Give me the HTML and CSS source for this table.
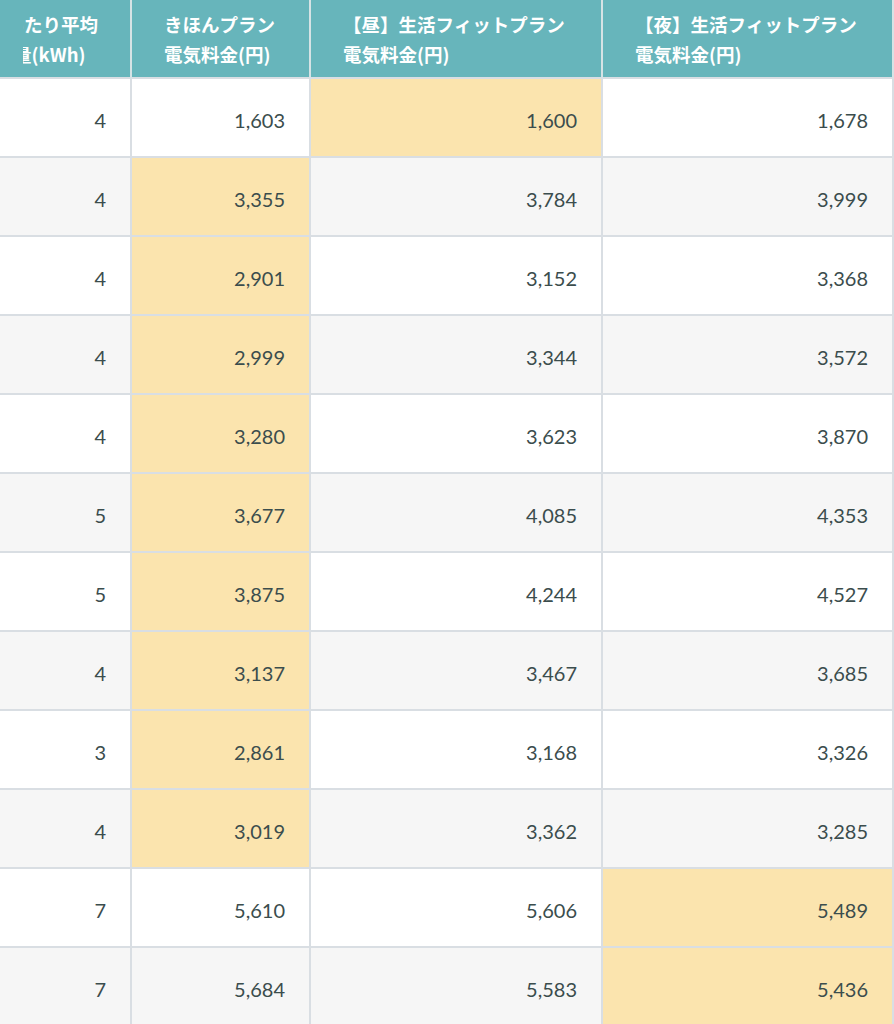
FILE: index.html
```html
<!DOCTYPE html>
<html lang="ja">
<head>
<meta charset="utf-8">
<title>電気料金比較</title>
<link rel="stylesheet" href="styles.css">
</head>
<body>
<div class="scroller">
  <table class="price-table">
    <colgroup>
      <col class="c-usage">
      <col class="c-basic">
      <col class="c-day">
      <col class="c-night">
    </colgroup>
    <thead>
      <tr>
        <th class="th-usage"><div class="clip"><div class="clip-text">1日あたり平均<br>使用量(kWh)</div></div></th>
        <th>きほんプラン<br>電気料金(円)</th>
        <th>【昼】生活フィットプラン<br>電気料金(円)</th>
        <th>【夜】生活フィットプラン<br>電気料金(円)</th>
      </tr>
    </thead>
    <tbody>
      <tr><td>4</td><td>1,603</td><td class="best">1,600</td><td>1,678</td></tr>
      <tr><td>4</td><td class="best">3,355</td><td>3,784</td><td>3,999</td></tr>
      <tr><td>4</td><td class="best">2,901</td><td>3,152</td><td>3,368</td></tr>
      <tr><td>4</td><td class="best">2,999</td><td>3,344</td><td>3,572</td></tr>
      <tr><td>4</td><td class="best">3,280</td><td>3,623</td><td>3,870</td></tr>
      <tr><td>5</td><td class="best">3,677</td><td>4,085</td><td>4,353</td></tr>
      <tr><td>5</td><td class="best">3,875</td><td>4,244</td><td>4,527</td></tr>
      <tr><td>4</td><td class="best">3,137</td><td>3,467</td><td>3,685</td></tr>
      <tr><td>3</td><td class="best">2,861</td><td>3,168</td><td>3,326</td></tr>
      <tr><td>4</td><td class="best">3,019</td><td>3,362</td><td>3,285</td></tr>
      <tr><td>7</td><td>5,610</td><td>5,606</td><td class="best">5,489</td></tr>
      <tr><td>7</td><td>5,684</td><td>5,583</td><td class="best">5,436</td></tr>
    </tbody>
  </table>
</div>
</body>
</html>
```

FILE: styles.css
```css
html, body {
  margin: 0;
  padding: 0;
  background: #ffffff;
}

body {
  font-family: "Lato", "Noto Sans CJK JP", sans-serif;
  color: #3b4d4d;
}

.scroller {
  width: 894px;
  overflow: hidden;
}

.price-table {
  width: 894px;
  table-layout: fixed;
  border-collapse: separate;
  border-spacing: 0;
}

.c-usage { width: 132px; }
.c-basic { width: 179px; }
.c-day { width: 292px; }
.c-night { width: 291px; }

.price-table th,
.price-table td {
  box-sizing: border-box;
  height: 79px;
  border-right: 2px solid #d9dee3;
  border-bottom: 2px solid #d9dee3;
}

.price-table th {
  background: #67b5bb;
  color: #ffffff;
  font-family: "Noto Sans CJK JP", sans-serif;
  font-size: 18.5px;
  font-weight: 700;
  line-height: 30px;
  text-align: left;
  vertical-align: middle;
  padding: 0 8px 0 32px;
  white-space: nowrap;
  border-right-color: #d6e3e5;
}

.price-table th.th-usage {
  padding: 0 32px 0 23px;
}

.clip {
  display: flex;
  justify-content: flex-end;
  overflow: hidden;
}

.clip-text {
  flex: none;
  white-space: nowrap;
}

.price-table td {
  font-size: 20px;
  text-align: right;
  vertical-align: middle;
  padding: 4px 24px 0 0;
  background: #ffffff;
}

.price-table tbody tr:nth-child(even) td {
  background: #f6f6f6;
}

.price-table tbody tr td.best {
  background: #fbe4ae;
}
```
